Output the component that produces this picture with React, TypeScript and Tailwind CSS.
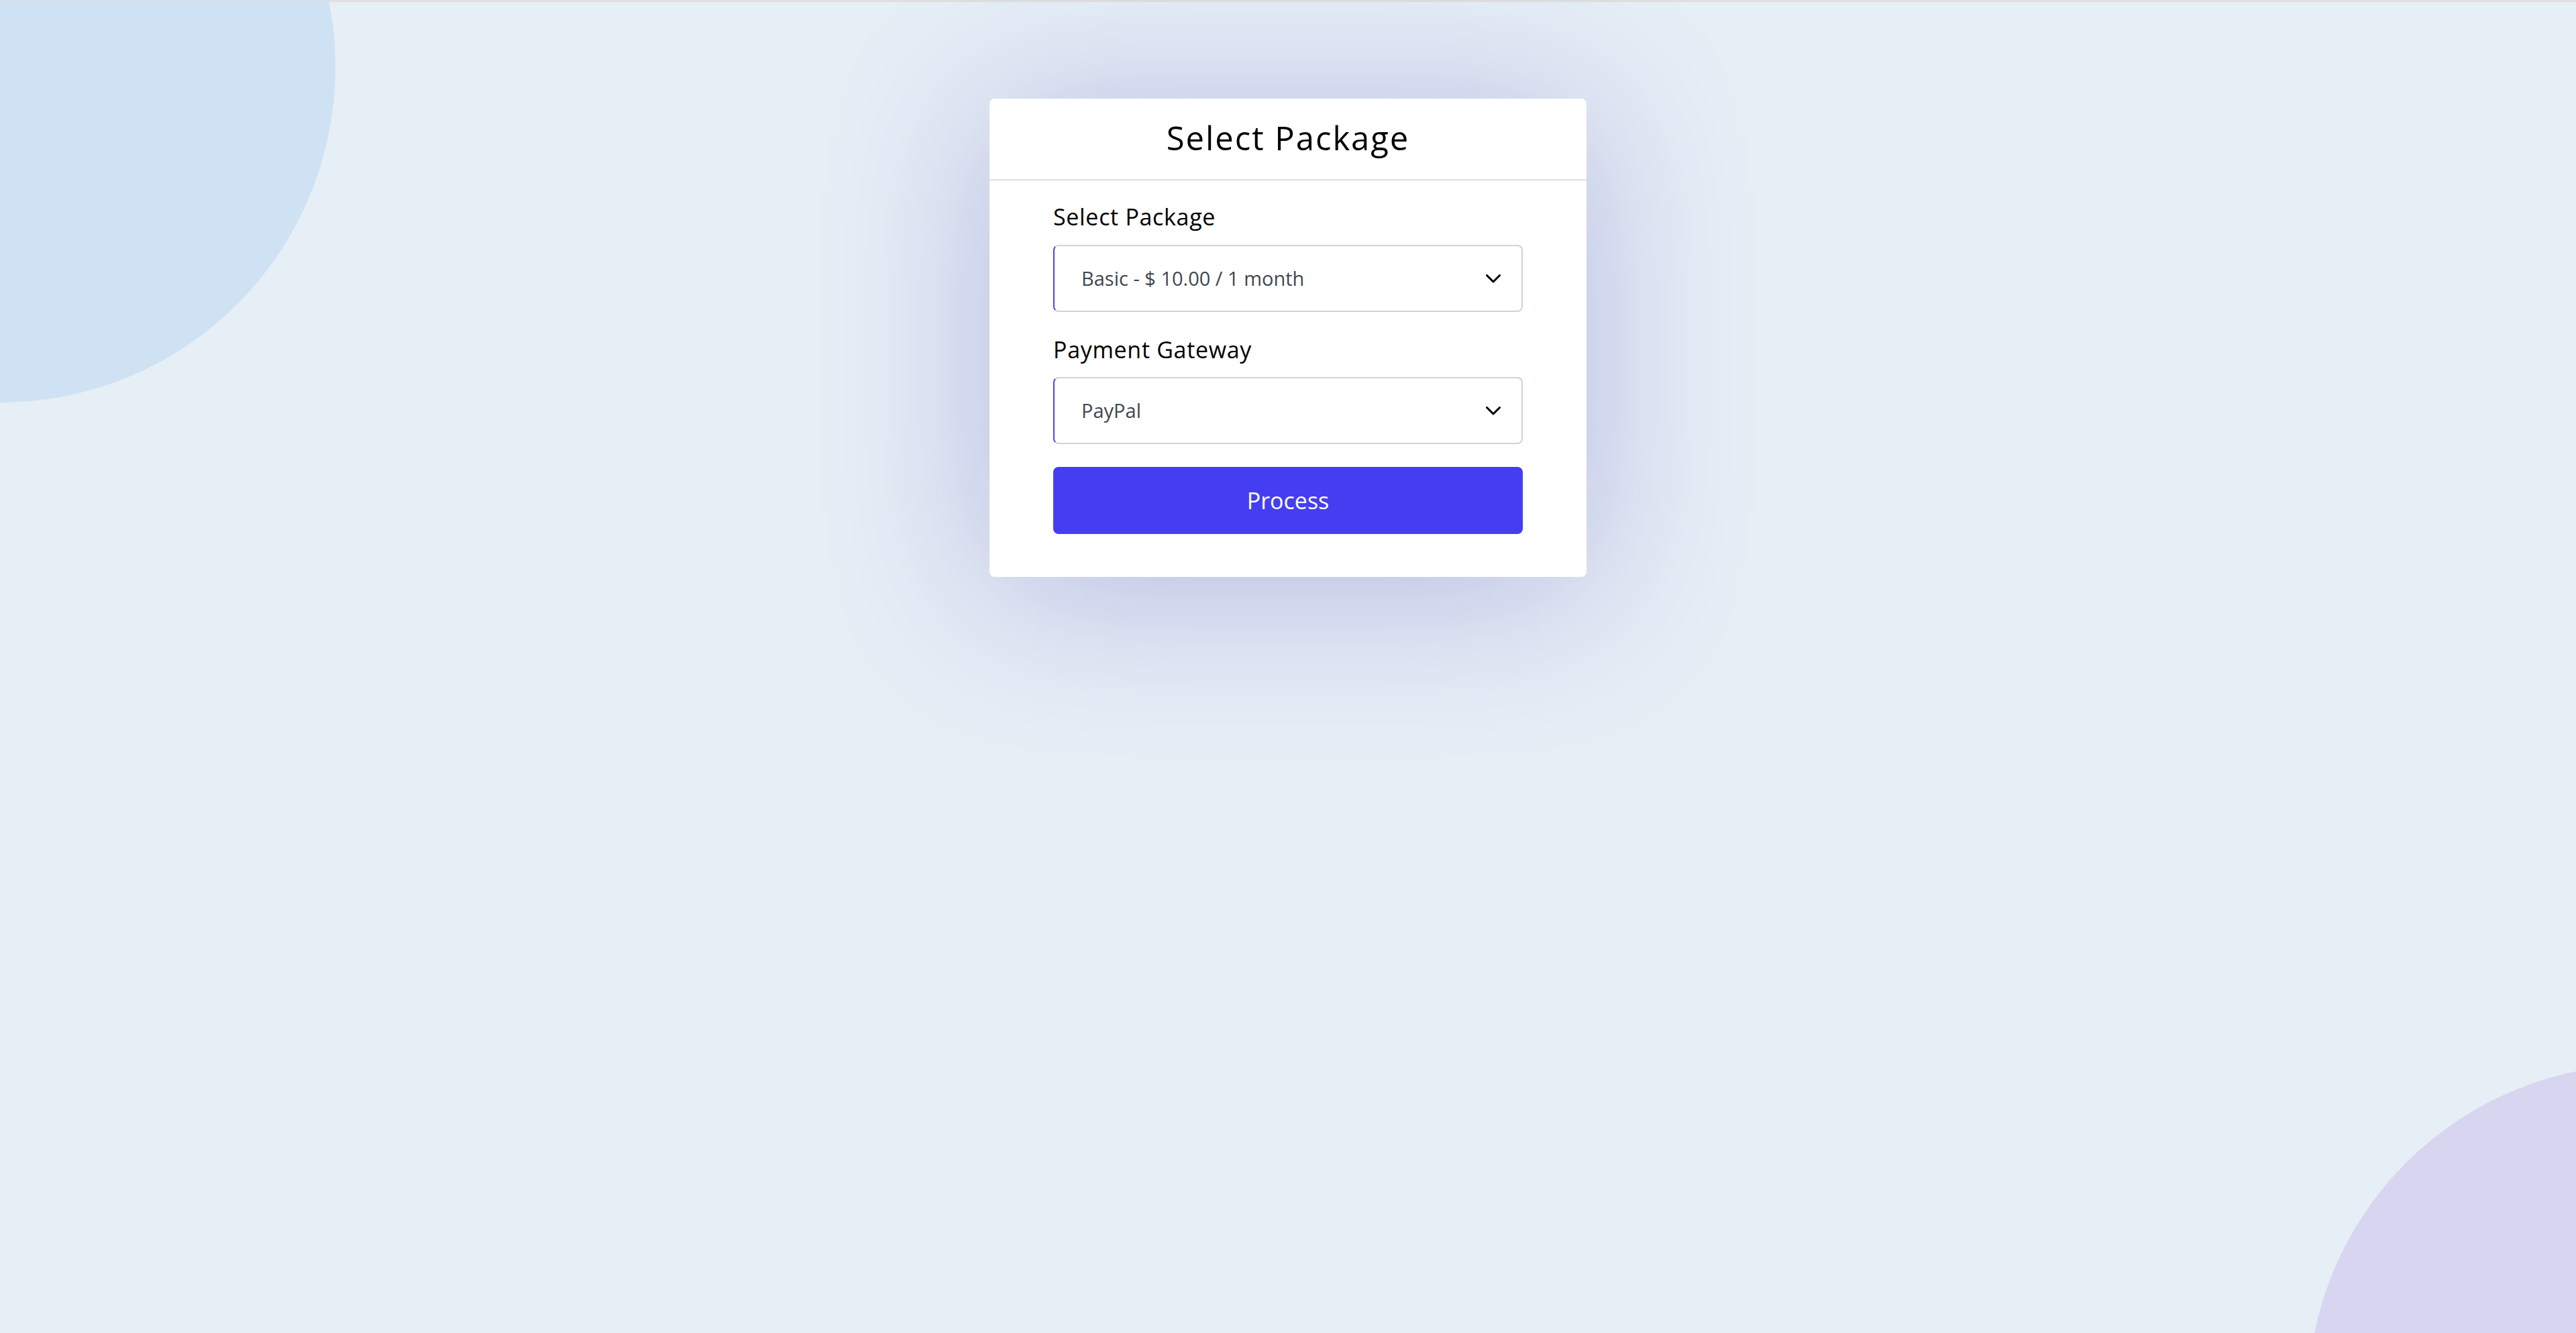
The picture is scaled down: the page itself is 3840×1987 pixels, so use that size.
function Chevron() {
  return (
    <svg
      width="22"
      height="13"
      viewBox="0 0 22 13"
      fill="none"
      stroke="currentColor"
      strokeWidth="3"
      strokeLinecap="round"
      strokeLinejoin="round"
      aria-hidden
    >
      <path d="M1.5 1.5 11 11l9.5-9.5" />
    </svg>
  );
}

function FakeSelect({ value }: { value: string }) {
  return (
    <div className="flex h-[100px] items-center justify-between rounded-[8px] border-2 border-[#ced3d9] border-l-[#4b46e6] bg-white pl-[40px] pr-[31px] text-[29px] text-[#41464f]">
      <span>{value}</span>
      <span className="text-black">
        <Chevron />
      </span>
    </div>
  );
}

export default function App() {
  return (
    <div className="relative h-[1987px] w-full overflow-hidden bg-[#e6eef6] font-['Open_Sans',sans-serif]">
      {/* decorative blobs */}
      <div className="absolute inset-x-0 top-0 h-[3px] bg-[#dedfde]" />
      <div className="absolute left-[-500px] top-[-400px] h-[1000px] w-[1000px] rounded-full bg-[#cfe2f3]" />
      <div className="absolute inset-x-0 top-0 h-px bg-[#dedfde]" />
      <div className="absolute left-[3440px] top-[1587px] h-[1000px] w-[1000px] rounded-full bg-[#d7d5ef]" />

      <div className="relative flex justify-center pt-[147px]">
        <div className="w-[890px] rounded-[8px] bg-white shadow-[0_20px_240px_rgba(60,50,170,0.28)]">
          <div className="flex h-[122px] items-center justify-center border-b-2 border-[#dfdfdf] pb-[2px]">
            <h1 className="text-[49px] tracking-[0.04em] text-black">
              Select Package
            </h1>
          </div>

          <form className="px-[95px] pb-[64px] pt-[30px]">
            <label className="mb-[18px] block text-[34px] font-medium leading-[48px] tracking-[0.02em] text-black">
              Select Package
            </label>
            <FakeSelect value="Basic - $ 10.00 / 1 month" />

            <label className="mb-[17px] mt-[32px] block text-[34px] font-medium leading-[48px] tracking-[0.02em] text-black">
              Payment Gateway
            </label>
            <FakeSelect value="PayPal" />

            <button
              type="button"
              className="mt-[34px] flex h-[100px] w-full items-center justify-center rounded-[8px] bg-[#453ef1] text-[34px] text-white"
            >
              Process
            </button>
          </form>
        </div>
      </div>
    </div>
  );
}
